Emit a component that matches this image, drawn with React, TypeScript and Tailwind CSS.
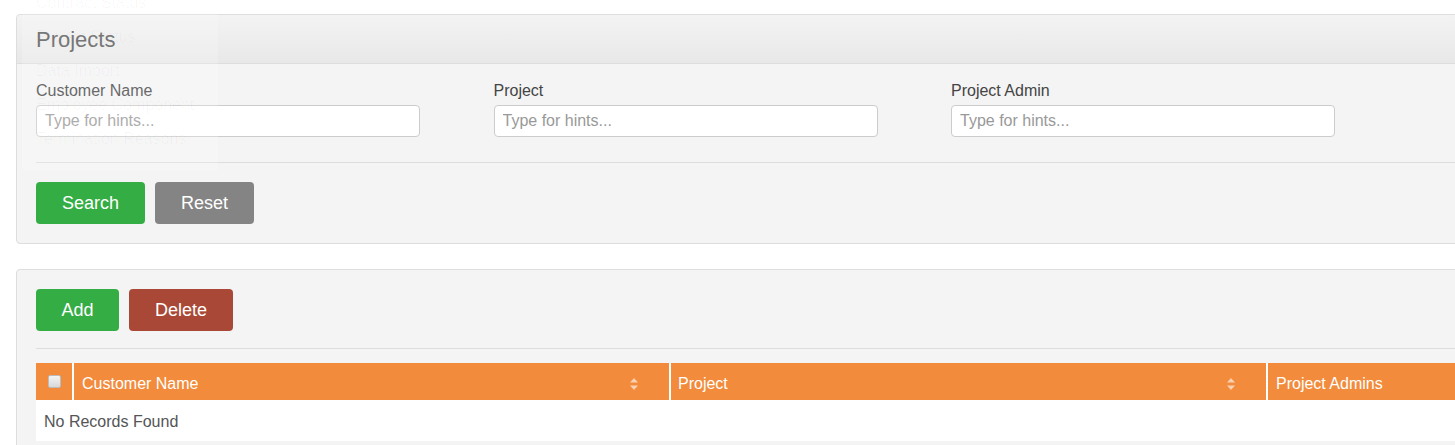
import React from 'react';

const font = { fontFamily: '"Liberation Sans", Arial, sans-serif' };

const ghostItems = ['Contract Status', 'Project Status', 'Data Import', 'Employee Component', 'Termination Reasons'];

function SortIcon() {
  return (
    <svg width="8" height="12" viewBox="0 0 8 12" className="opacity-60">
      <path d="M4 0 L8 4.5 H0 Z" fill="#fff" />
      <path d="M4 12 L8 7.5 H0 Z" fill="#fff" />
    </svg>
  );
}

function Field({ label }: { label: string }) {
  return (
    <div className="w-[384px]">
      <div className="text-[16px] leading-[22px] text-[#444] mt-[1px] mb-[3px]">{label}</div>
      <input
        className="w-full h-[32px] bg-white border border-[#ccc] rounded-[4px] px-[8px] text-[16px] placeholder:text-[#999] outline-none"
        placeholder="Type for hints..."
        style={font}
      />
    </div>
  );
}

export default function App() {
  return (
    <div className="relative w-full h-[445px] overflow-hidden bg-white" style={font}>
      <div className="pl-[16px] pt-[14px]">
        {/* search panel */}
        <div className="w-[1500px] border border-[#ddd] rounded-[4px] bg-[#f4f4f4]">
          <div className="h-[49px] flex items-center px-[19px] border-b border-[#ddd] bg-gradient-to-b from-[#f3f3f3] to-[#e8e8e8] rounded-t-[4px]">
            <span className="text-[22px] text-[#555]">Projects</span>
          </div>
          <div className="px-[19px] pt-[15px] pb-[19px]">
            <div className="flex gap-[73.5px]">
              <Field label="Customer Name" />
              <Field label="Project" />
              <Field label="Project Admin" />
            </div>
            <div className="h-px bg-[#ddd] mt-[25px] mb-[19px]" />
            <div className="flex gap-[10px]">
              <button className="h-[42px] w-[109px] rounded-[4px] bg-[#33ad44] text-white text-[18px]">Search</button>
              <button className="h-[42px] w-[99px] rounded-[4px] bg-[#848484] text-white text-[18px]">Reset</button>
            </div>
          </div>
        </div>

        {/* list panel */}
        <div className="mt-[25px] w-[1500px] h-[300px] border border-[#ddd] rounded-[4px] bg-[#f4f4f4] px-[19px] pt-[19px]">
          <div className="flex gap-[10px]">
            <button className="h-[42px] w-[83px] rounded-[4px] bg-[#33ad44] text-white text-[18px]">Add</button>
            <button className="h-[42px] w-[104px] rounded-[4px] bg-[#a94836] text-white text-[18px]">Delete</button>
          </div>
          <div className="h-px bg-[#ddd] mt-[17px] mb-[14px]" />
          <div className="bg-white">
            <div className="flex h-[37px] bg-[#f28b3b] text-white text-[16px]">
              <div className="w-[38px] flex items-center justify-center border-r-2 border-white">
                <div className="w-[13px] h-[13px] rounded-[2px] border border-[#bbb] bg-gradient-to-b from-[#f4f4f4] to-[#d8d8d8]" />
              </div>
              <div className="w-[597px] flex items-center justify-between pl-[8px] pr-[31px] pt-[5px] border-r-2 border-white">
                <span>Customer Name</span>
                <SortIcon />
              </div>
              <div className="w-[597px] flex items-center justify-between pl-[7px] pr-[31px] pt-[5px] border-r-2 border-white">
                <span>Project</span>
                <SortIcon />
              </div>
              <div className="flex-1 flex items-center pl-[8px] pt-[5px]">
                <span>Project Admins</span>
              </div>
            </div>
            <div className="h-[41px] flex items-center pl-[8px] pt-[2px] text-[16px] text-[#555]">No Records Found</div>
          </div>
        </div>
      </div>

      {/* fading dropdown menu */}
      <div className="absolute left-[22px] top-0 w-[196px] h-[171px] bg-white/20 rounded-b-[4px] px-[14px] pointer-events-none">
        <div className="-mt-[8px] flex flex-col gap-[12px] text-[16px] leading-[22px] text-black/[0.03]">
          {ghostItems.map((t) => (
            <div key={t}>{t}</div>
          ))}
        </div>
      </div>
    </div>
  );
}
